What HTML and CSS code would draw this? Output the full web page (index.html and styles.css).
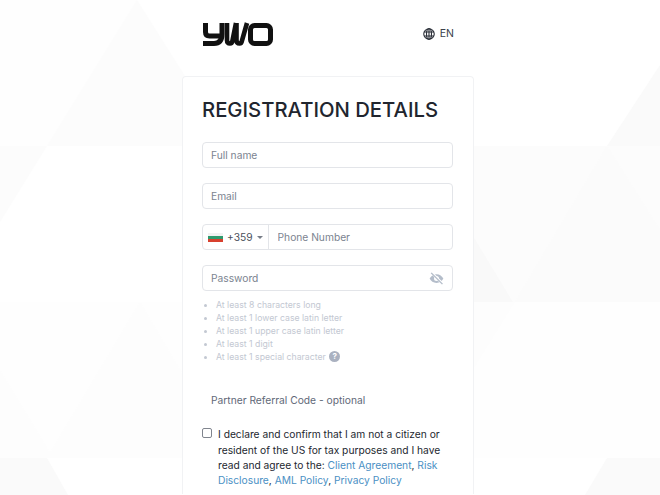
FILE: index.html
```html
<!DOCTYPE html>
<html lang="en">
<head>
    <meta charset="UTF-8">
    <meta name="viewport" content="width=device-width, initial-scale=1.0">
    <title>Registration Details</title>
    <link rel="stylesheet" href="styles.css">
</head>
<body>
    <svg class="backdrop" viewBox="0 0 660 495" aria-hidden="true">
        <polygon points="137,0 47,146 0,146 0,0" fill="#fefefe"/>
        <polygon points="137,0 190,84 182,146 47,146" fill="#fcfcfc"/>
        <polygon points="47,146 0,222 0,146" fill="#fcfcfc"/>
        <polygon points="0,302 660,302 660,458 0,458" fill="#fefefe"/>
        <polygon points="140,302 232,458 47,458" fill="#fdfdfd"/>
        <polygon points="0,370 53,458 0,458" fill="#fdfdfd"/>
        <polygon points="0,458 47,458 68,495 0,495" fill="#fafafa"/>
        <polygon points="473,146 660,146 660,302 473,302" fill="#fcfcfc"/>
        <polygon points="607,146 515,302 660,302 660,230" fill="#fbfbfb"/>
        <polygon points="660,65 607,146 660,146" fill="#fafafa"/>
        <polygon points="473,236 513,302 473,302" fill="#f9f9f9"/>
        <polygon points="515,302 473,370 473,302" fill="#fdfdfd"/>
        <polygon points="607,458 660,458 660,495 585,495" fill="#fafafa"/>
    </svg>

    <div class="page">
        <header class="top-bar">
            <svg class="logo" viewBox="0 0 70 24" width="70" height="24" role="img" aria-label="YWO">
                <path d="M2.500 1v9q0 4 4 4h12M19 1v11q0 9.500-8 9.500H0" fill="none" stroke="#111" stroke-width="5"/>
                <path d="M24 1v17q0 3.500 3 3.500 2 0 2.500-3L33 1M33.500 1v17q0 3.500 3 3.500 2 0 2.500-3L44 1" fill="none" stroke="#111" stroke-width="4.600"/>
                <rect x="47.500" y="3.500" width="20" height="18" rx="4" fill="none" stroke="#111" stroke-width="5"/>
            </svg>
            <div class="lang">
                <svg viewBox="0 0 24 24" width="12" height="12" fill="none" stroke="#2a2f38" stroke-width="2.200">
                    <circle cx="12" cy="12" r="10.500"/>
                    <ellipse cx="12" cy="12" rx="5" ry="10.500"/>
                    <path d="M2 8h20M2 16h20M12 1v22"/>
                </svg>
                <span>EN</span>
            </div>
        </header>

        <main class="card">
            <h1>REGISTRATION DETAILS</h1>

            <form class="reg-form">
                <input class="field" type="text" placeholder="Full name">
                <input class="field" type="email" placeholder="Email">

                <div class="field phone">
                    <div class="country">
                        <span class="flag"><i class="white"></i><i class="green"></i><i class="red"></i></span>
                        <span>+359</span>
                        <span class="caret"></span>
                    </div>
                    <input type="tel" placeholder="Phone Number">
                </div>

                <div class="field password">
                    <input type="password" placeholder="Password">
                    <svg viewBox="0 0 24 24" width="15" height="15" fill="#b4bdca">
                        <path d="M12 5c-5 0-9 3-11 7 2 4 6 7 11 7s9-3 11-7c-2-4-6-7-11-7zm0 3a4 4 0 1 1 0 8 4 4 0 0 1 0-8z"/>
                        <path d="M4 2.500 22 20.500" stroke="#fff" stroke-width="4"/>
                        <path d="M3.500 3 21.500 21" stroke="#b4bdca" stroke-width="2.200"/>
                    </svg>
                </div>
            </form>

            <ul class="rules">
                <li>At least 8 characters long</li>
                <li>At least 1 lower case latin letter</li>
                <li>At least 1 upper case latin letter</li>
                <li>At least 1 digit</li>
                <li>At least 1 special character <span class="help">?</span></li>
            </ul>

            <div class="partner">Partner Referral Code - optional</div>

            <label class="consent">
                <input type="checkbox">
                <span>I declare and confirm that I am not a citizen or resident of the US for tax purposes and I have read and agree to the: <a href="#">Client Agreement</a>, <a href="#">Risk Disclosure</a>, <a href="#">AML Policy</a>, <a href="#">Privacy Policy</a></span>
            </label>
        </main>
    </div>
</body>
</html>
```

FILE: styles.css
```css
html, body {
    height: 100%;
    overflow: hidden;
}
body {
    margin: 0;
    background: #fff;
    font-family: Inter, "Liberation Sans", sans-serif;
    color: #2a2f38;
}
.backdrop {
    position: absolute;
    top: 0;
    left: 0;
    width: 660px;
    height: 495px;
}
.page {
    position: relative;
    width: 292px;
    margin-left: 182px;
}
.top-bar {
    display: flex;
    justify-content: space-between;
    align-items: center;
    height: 76px;
    padding: 0 20px 9px 21px;
    box-sizing: border-box;
}
.logo {
    display: block;
}
.lang {
    display: flex;
    align-items: center;
    gap: 5px;
    font-size: 10.500px;
    color: #3a404b;
}
.card {
    height: 418px;
    padding: 19px 20px 0 19px;
    box-sizing: border-box;
    background: #fff;
    border: 1px solid #f1f2f4;
    border-bottom: none;
    border-radius: 4px 4px 0 0;
}
h1 {
    margin: 0 0 19px;
    font-size: 20.300px;
    line-height: 27px;
    font-weight: 500;
    color: #21252e;
    white-space: nowrap;
}
.reg-form {
    display: flex;
    flex-direction: column;
    gap: 15px;
}
.field {
    display: flex;
    align-items: center;
    width: 100%;
    height: 26px;
    box-sizing: border-box;
    background: #fff;
    border: 1px solid #e3e5e9;
    border-radius: 4px;
    font: 10.240px Inter, sans-serif;
    color: #4a505b;
}
input.field {
    padding: 0 8px;
}
input {
    font: 10.240px Inter, sans-serif;
}
input::placeholder {
    color: #7b8490;
    opacity: 1;
}
.phone input, .password input {
    flex: 1;
    min-width: 0;
    height: 100%;
    padding: 0 8px;
    border: none;
    background: none;
    outline: none;
}
.phone input {
    padding-left: 9px;
}
.country {
    display: flex;
    align-items: center;
    gap: 4px;
    height: 100%;
    padding: 0 5px;
    border-right: 1px solid #e3e5e9;
}
.flag {
    display: flex;
    flex-direction: column;
    width: 15px;
    height: 9px;
}
.flag i {
    flex: 1;
}
.flag .white { background: #f2f2f2; }
.flag .green { background: #2e9b6e; }
.flag .red { background: #d8412f; }
.caret {
    width: 0;
    height: 0;
    border-left: 3.500px solid transparent;
    border-right: 3.500px solid transparent;
    border-top: 3.500px solid #777d87;
}
.password svg {
    margin-right: 8px;
}
.rules {
    margin: 8px 0 0;
    padding: 0 0 0 14px;
    list-style: disc;
    font-size: 8.700px;
    line-height: 13.100px;
    color: #c3c8d2;
}
.help {
    display: inline-block;
    width: 11px;
    height: 11px;
    margin-left: 1px;
    border-radius: 50%;
    background: #aab1c0;
    color: #fff;
    font-size: 8px;
    font-weight: 700;
    line-height: 11px;
    text-align: center;
    vertical-align: 1px;
}
.partner {
    margin-top: 29px;
    padding-left: 9px;
    font-size: 10.240px;
    line-height: 14px;
    color: #5f6978;
}
.consent {
    display: flex;
    gap: 6px;
    margin-top: 20px;
    font-size: 10.240px;
    line-height: 15.200px;
    color: #23272f;
}
.consent input {
    flex: none;
    appearance: none;
    width: 10px;
    height: 10px;
    margin: 1px 0 0;
    background: #fff;
    border: 1px solid #80858e;
    border-radius: 2px;
}
a {
    color: #4a90c4;
    text-decoration: none;
}
```
